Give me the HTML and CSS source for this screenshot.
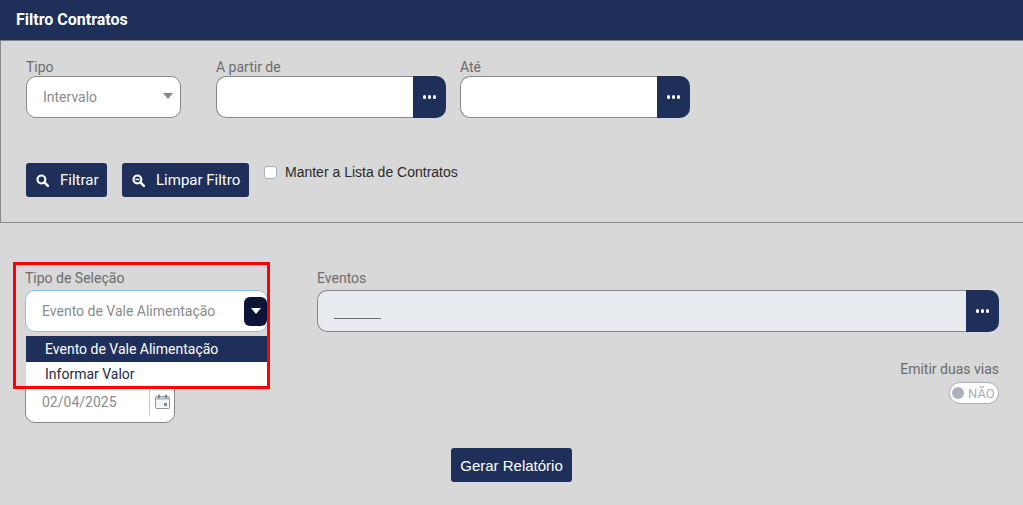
FILE: index.html
```html
<!DOCTYPE html>
<html lang="en">
<head>
    <title>Filtro Contratos</title>
    <link rel="stylesheet" href="styles.css">
</head>
<body>
<div class="panel-title">Filtro Contratos</div>
<div class="filter-panel">
    <div class="filter-row">
        <div class="field field-tipo">
            <label>Tipo</label>
            <div class="input select-box">
                <span class="value">Intervalo</span>
                <span class="caret"></span>
            </div>
        </div>
        <div class="field field-date">
            <label>A partir de</label>
            <div class="input-group">
                <div class="input"></div>
                <button type="button" class="dots-btn"><i></i><i></i><i></i></button>
            </div>
        </div>
        <div class="field field-ate">
            <label>Até</label>
            <div class="input-group">
                <div class="input"></div>
                <button type="button" class="dots-btn"><i></i><i></i><i></i></button>
            </div>
        </div>
    </div>
    <div class="action-row">
        <button type="button" class="btn">
            <svg width="13" height="13" viewBox="0 0 12 12"><circle cx="5" cy="5" r="3.6" fill="none" stroke="#fff" stroke-width="2"/><path d="M7.8 7.8L11 11" stroke="#fff" stroke-width="2.2" stroke-linecap="round"/></svg>
            <span>Filtrar</span>
        </button>
        <button type="button" class="btn">
            <svg width="13" height="13" viewBox="0 0 12 12"><circle cx="5" cy="5" r="3.6" fill="none" stroke="#fff" stroke-width="2"/><path d="M7.8 7.8L11 11" stroke="#fff" stroke-width="2.2" stroke-linecap="round"/><path d="M3.2 5h3.6" stroke="#fff" stroke-width="1.3"/></svg>
            <span>Limpar Filtro</span>
        </button>
        <label class="check"><span class="check-box"></span>Manter a Lista de Contratos</label>
    </div>
</div>

<div class="report-form">
    <div class="report-top">
        <div class="field field-selecao">
            <label>Tipo de Seleção</label>
            <div class="input select-box select-open">
                <span class="value">Evento de Vale Alimentação</span>
                <span class="caret-btn"></span>
            </div>
            <ul class="dropdown">
                <li class="active">Evento de Vale Alimentação</li>
                <li>Informar Valor</li>
            </ul>
            <div class="highlight"></div>
        </div>
        <div class="field field-eventos">
            <label>Eventos</label>
            <div class="input-group">
                <div class="input input-disabled"><span class="blank-line"></span></div>
                <button type="button" class="dots-btn"><i></i><i></i><i></i></button>
            </div>
        </div>
    </div>
    <div class="report-middle">
        <div class="input date-box">
            <span class="value">02/04/2025</span>
            <span class="date-icon">
                <svg width="15" height="15" viewBox="0 0 15 15"><rect x=".5" y="2.5" width="14" height="12" rx="1" fill="#f3f5f7" stroke="#8a96a0"/><path d="M.5 3.5h14v2H.5z" fill="#aab4bc"/><path d="M4 .5v3.5M11 .5v3.5" stroke="#6f7c87" stroke-width="1.6"/><rect x="9" y="9" width="3" height="3" fill="#7d8a96"/></svg>
            </span>
        </div>
        <div class="switch-field">
            <label>Emitir duas vias</label>
            <div class="switch"><span class="knob"></span>NÃO</div>
        </div>
    </div>
    <div class="submit-row">
        <button type="button" class="btn btn-submit">Gerar Relatório</button>
    </div>
</div>
</body>
</html>
```

FILE: styles.css
```css
* {
    box-sizing: border-box;
}
html, body {
    height: 100%;
}
body {
    margin: 0;
    background-color: #d8d8d8;
    font-family: Roboto, "Liberation Sans", sans-serif;
    font-size: 14px;
    overflow: hidden;
}
.panel-title {
    height: 40px;
    line-height: 40px;
    padding-left: 16px;
    background-color: #1e3059;
    color: #fff;
    font-weight: 700;
    font-size: 16px;
}
.filter-panel {
    height: 183px;
    padding: 19px 25px 0;
    border: 1px solid #888;
    border-top: 1px solid #7f8590;
    border-right: none;
}
.filter-row {
    display: flex;
}
.field label {
    display: block;
    height: 16px;
    line-height: 14px;
    color: #6c6c6c;
    font-size: 14px;
}
.input {
    height: 42px;
    background-color: #fff;
    border: 1px solid #888;
    border-radius: 10px;
    color: #8b8b8b;
    font-size: 14px;
}
.select-box {
    display: flex;
    align-items: center;
    justify-content: space-between;
    padding: 0 6px 0 16px;
}
.field-tipo {
    width: 155px;
    margin-right: 35px;
}
.caret {
    width: 0;
    height: 0;
    margin-right: 1px;
    margin-bottom: 2px;
    border-left: 5.5px solid transparent;
    border-right: 5.5px solid transparent;
    border-top: 6px solid #888;
}
.field-date {
    width: 230px;
    margin-right: 14px;
}
.field-ate {
    width: 230px;
}
.input-group {
    display: flex;
}
.input-group .input {
    flex: 1;
    border-right: none;
    border-radius: 10px 0 0 10px;
}
.dots-btn {
    display: flex;
    align-items: center;
    justify-content: center;
    gap: 1.5px;
    width: 33px;
    height: 42px;
    padding: 0;
    border: none;
    border-radius: 0 10px 10px 0;
    background-color: #1e3059;
}
.dots-btn i {
    width: 3.5px;
    height: 3.5px;
    border-radius: 50%;
    background-color: #fff;
}
.action-row {
    display: flex;
    align-items: flex-start;
    margin-top: 45px;
}
.btn {
    display: flex;
    align-items: center;
    gap: 11px;
    height: 34px;
    padding: 0 0 0 10px;
    border: none;
    border-radius: 3px;
    background-color: #1e3059;
    color: #fff;
    font-family: Roboto, "Liberation Sans", sans-serif;
    font-size: 15px;
    white-space: nowrap;
}
.btn svg {
    flex-shrink: 0;
}
.action-row .btn {
    margin-right: 15px;
}
.action-row .btn:first-child {
    width: 81px;
}
.action-row .btn:nth-child(2) {
    width: 127px;
}
.check {
    display: flex;
    align-items: center;
    height: 18px;
    color: #2a2a2a;
    font-family: "Liberation Sans", sans-serif;
    font-size: 14px;
}
.check-box {
    width: 13px;
    height: 13px;
    margin-right: 8px;
    background-color: #fff;
    border: 1px solid #a9b0bb;
    border-radius: 3px;
}
.report-form {
    padding: 47px 24px 0 25px;
}
.report-top {
    display: flex;
}
.report-top .field label {
    height: 20px;
    line-height: 16px;
}
.field-selecao {
    position: relative;
    width: 243px;
    margin-right: 49px;
}
.select-open {
    border-color: #8fbcf0;
    padding-right: 0;
}
.caret-btn {
    display: flex;
    align-items: center;
    justify-content: center;
    width: 23px;
    height: 29px;
    border-radius: 6px;
    background-color: #0c1437;
}
.caret-btn::after {
    content: "";
    width: 0;
    height: 0;
    border-left: 5.5px solid transparent;
    border-right: 5.5px solid transparent;
    border-top: 6px solid #fff;
}
.dropdown {
    position: absolute;
    z-index: 2;
    top: 66px;
    left: 1px;
    right: 0;
    margin: 0;
    padding: 0;
    list-style: none;
    background-color: #fff;
    color: #1d2a44;
    font-size: 14px;
}
.dropdown li {
    height: 26px;
    line-height: 24px;
    padding-left: 19px;
}
.dropdown .active {
    line-height: 26px;
    background-color: #1e3059;
    color: #fff;
}
.highlight {
    position: absolute;
    z-index: 3;
    top: -8px;
    left: -12px;
    width: 257px;
    height: 127px;
    border: 3px solid #f00;
}
.field-eventos {
    flex: 1;
}
.input-disabled {
    background-color: #e8ebef;
}
.blank-line {
    display: block;
    width: 47px;
    margin: 27px 0 0 16px;
    border-bottom: 1px solid #66707f;
}
.report-middle {
    display: flex;
    justify-content: space-between;
    margin-top: 18px;
    height: 73px;
}
.date-box {
    display: flex;
    align-items: center;
    justify-content: space-between;
    width: 150px;
    margin-top: 31px;
    padding-left: 16px;
}
.date-icon {
    display: flex;
    align-items: center;
    justify-content: center;
    width: 25px;
    height: 28px;
    margin-top: -2px;
    border-left: 1px solid #c9c9c9;
}
.switch-field {
    display: flex;
    flex-direction: column;
    align-items: flex-end;
    padding-top: 11px;
}
.switch-field label {
    height: 16px;
    line-height: 16px;
    color: #6c6c6c;
    font-size: 14px;
}
.switch {
    display: flex;
    align-items: center;
    gap: 4px;
    width: 50px;
    height: 22px;
    margin-top: 5px;
    padding-left: 2px;
    background-color: #fff;
    border: 1px solid #aab1ba;
    border-radius: 11px;
    color: #a9afb8;
    font-size: 13px;
}
.knob {
    width: 12px;
    height: 12px;
    border-radius: 50%;
    background-color: #aab1ba;
}
.submit-row {
    display: flex;
    justify-content: center;
    margin-top: 25px;
    padding-right: 1px;
}
.btn-submit {
    width: 121px;
    justify-content: center;
    padding: 0;
    font-family: "Liberation Sans", sans-serif;
    font-size: 15px;
}
```
